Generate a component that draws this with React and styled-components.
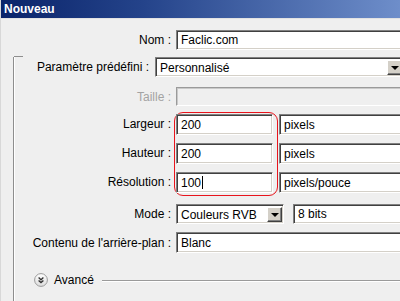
import React from "react";
import styled, { createGlobalStyle } from "styled-components";

const Global = createGlobalStyle`
  html, body {
    margin: 0;
    padding: 0;
    overflow: hidden;
    background: #efefef;
  }
  body {
    font-family: "Liberation Sans", Arial, sans-serif;
    font-size: 12px;
    color: #000;
  }
`;

const Window = styled.div`
  width: 404px;
  height: 301px;
  overflow: hidden;
  background: #efefef;
  border-left: 1px solid #d8d8d8;
  box-sizing: border-box;
`;

const TitleBar = styled.div`
  height: 18px;
  line-height: 18px;
  padding-left: 3px;
  background: linear-gradient(90deg, #0a246a 0%, #24438a 35%, #6f8fcb 100%);
  color: #fff;
  font-weight: bold;
  font-size: 12px;
  border-bottom: 1px solid #e2e2e2;
`;

const Content = styled.div`
  padding-top: 11px;
`;

const Row = styled.div`
  display: grid;
  grid-template-columns: ${(p) => p.$labelW}px 1fr;
  column-gap: ${(p) => p.$gap || 5}px;
  align-items: center;
  margin-top: ${(p) => p.$mt || 0}px;
`;

const Label = styled.div`
  text-align: right;
  white-space: nowrap;
  color: ${(p) => (p.$disabled ? "#a3a3a3" : "#000")};
`;

const Field = styled.div`
  height: ${(p) => p.$h || 20}px;
  box-sizing: border-box;
  background: #fff;
  border: 1px solid;
  border-color: #808080 #ffffff #ffffff #808080;
  box-shadow: inset 1px 1px 0 #404040, inset -1px -1px 0 #d4d0c8;
  padding-left: 4px;
  display: flex;
  align-items: center;
  white-space: nowrap;
  overflow: hidden;
  width: ${(p) => (p.$w ? `${p.$w}px` : "auto")};
  flex: ${(p) => (p.$w ? "none" : "1")};
`;

const DisabledField = styled.div`
  height: 19px;
  box-sizing: border-box;
  background: #efefef;
  border: 1px solid;
  border-color: #9a9a9a #ffffff #ffffff #9a9a9a;
  box-shadow: inset 1px 1px 0 #c9c9c9;
`;

const Select = styled.div`
  height: ${(p) => p.$h || 20}px;
  box-sizing: border-box;
  background: #fff;
  border: 1px solid;
  border-color: #808080 #ffffff #ffffff #808080;
  box-shadow: inset 1px 1px 0 #404040, inset -1px -1px 0 #d4d0c8;
  display: flex;
  align-items: stretch;
  padding: 2px 1px 1px 2px;
  width: ${(p) => (p.$w ? `${p.$w}px` : "auto")};
  flex: ${(p) => (p.$w ? "none" : "1")};
`;

const SelectText = styled.div`
  flex: 1;
  padding-left: 2px;
  display: flex;
  align-items: center;
  white-space: nowrap;
  overflow: hidden;
`;

const DropButton = styled.div`
  width: 15px;
  box-sizing: border-box;
  background: #d4d0c8;
  border: 1px solid;
  border-color: #ffffff #404040 #404040 #ffffff;
  box-shadow: inset -1px -1px 0 #808080;
  display: flex;
  align-items: center;
  justify-content: center;
`;

const Arrow = styled.div`
  width: 0;
  height: 0;
  border-left: 4px solid transparent;
  border-right: 4px solid transparent;
  border-top: 4px solid #000;
`;

const Group = styled.div`
  position: relative;
  margin: 13px 0 0 12px;
  border-left: 1px solid #8e8e8e;
  box-shadow: inset 1px 0 0 #ffffff;
  padding-bottom: 30px;

  &::before {
    content: "";
    position: absolute;
    top: -1px;
    left: 0;
    width: 9px;
    height: 1px;
    background: #8e8e8e;
  }
`;

const DimBlock = styled.div`
  display: grid;
  grid-template-columns: 157px 104px 1fr;
  column-gap: 3px;
  margin-top: 6px;
`;

const Column = styled.div`
  display: flex;
  flex-direction: column;
  gap: 8px;
  padding: 2px 0 3px;
`;

const RedBox = styled.div`
  display: flex;
  flex-direction: column;
  gap: 8px;
  border: 1px solid #e8141c;
  border-radius: 9px;
  padding: 1px 4px 2px 1px;
`;

const DimLabel = styled(Label)`
  height: 21px;
  line-height: 21px;
`;

const UnitsColumn = styled(Column)`
  margin-left: -2px;
`;

const Caret = styled.span`
  display: inline-block;
  width: 1px;
  height: 13px;
  background: #000;
  margin-left: 1px;
`;

const FieldPair = styled.div`
  display: flex;
  gap: 9px;
`;

const AdvancedRow = styled.div`
  display: flex;
  align-items: center;
  gap: 6px;
  padding-left: 20px;
  margin-top: 20px;
`;

const Rule = styled.div`
  flex: 1;
  height: 1px;
  background: #9a9a9a;
  box-shadow: 0 1px 0 #ffffff;
  margin-left: 2px;
`;

const ExpandIcon = () => (
  <svg width="14" height="14" viewBox="0 0 14 14">
    <defs>
      <linearGradient id="g" x1="0" y1="0" x2="0" y2="1">
        <stop offset="0" stopColor="#ffffff" />
        <stop offset="1" stopColor="#dcdcdc" />
      </linearGradient>
    </defs>
    <circle cx="7" cy="7" r="6.4" fill="url(#g)" stroke="#9b9b9b" />
    <path d="M4.6 4.6 L7 6.8 L9.4 4.6 M4.6 7.4 L7 9.6 L9.4 7.4" fill="none" stroke="#333" strokeWidth="1.3" />
  </svg>
);

export default function App() {
  return (
    <Window>
      <Global />
      <TitleBar>Nouveau</TitleBar>
      <Content>
        <Row $labelW={170}>
          <Label>Nom :</Label>
          <Field>Faclic.com</Field>
        </Row>

        <Group>
          <Row $labelW={135} $gap={6} $mt={-6}>
            <Label>Paramètre prédéfini :</Label>
            <Select>
              <SelectText>Personnalisé</SelectText>
              <DropButton>
                <Arrow />
              </DropButton>
            </Select>
          </Row>

          <Row $labelW={157} $mt={10}>
            <Label $disabled>Taille :</Label>
            <DisabledField />
          </Row>

          <DimBlock>
            <Column>
              <DimLabel>Largeur :</DimLabel>
              <DimLabel>Hauteur :</DimLabel>
              <DimLabel>Résolution :</DimLabel>
            </Column>
            <RedBox>
              <Field $h={21}>200</Field>
              <Field $h={21}>200</Field>
              <Field $h={21}>
                100
                <Caret />
              </Field>
            </RedBox>
            <UnitsColumn>
              <Field $h={21}>pixels</Field>
              <Field $h={21}>pixels</Field>
              <Field $h={21}>pixels/pouce</Field>
            </UnitsColumn>
          </DimBlock>

          <Row $labelW={157} $mt={8}>
            <Label>Mode :</Label>
            <FieldPair>
              <Select $w={108}>
                <SelectText>Couleurs RVB</SelectText>
                <DropButton>
                  <Arrow />
                </DropButton>
              </Select>
              <Field>8 bits</Field>
            </FieldPair>
          </Row>

          <Row $labelW={157} $mt={8}>
            <Label>Contenu de l'arrière-plan :</Label>
            <Field $h={21}>Blanc</Field>
          </Row>

          <AdvancedRow>
            <ExpandIcon />
            <span>Avancé</span>
            <Rule />
          </AdvancedRow>
        </Group>
      </Content>
    </Window>
  );
}
